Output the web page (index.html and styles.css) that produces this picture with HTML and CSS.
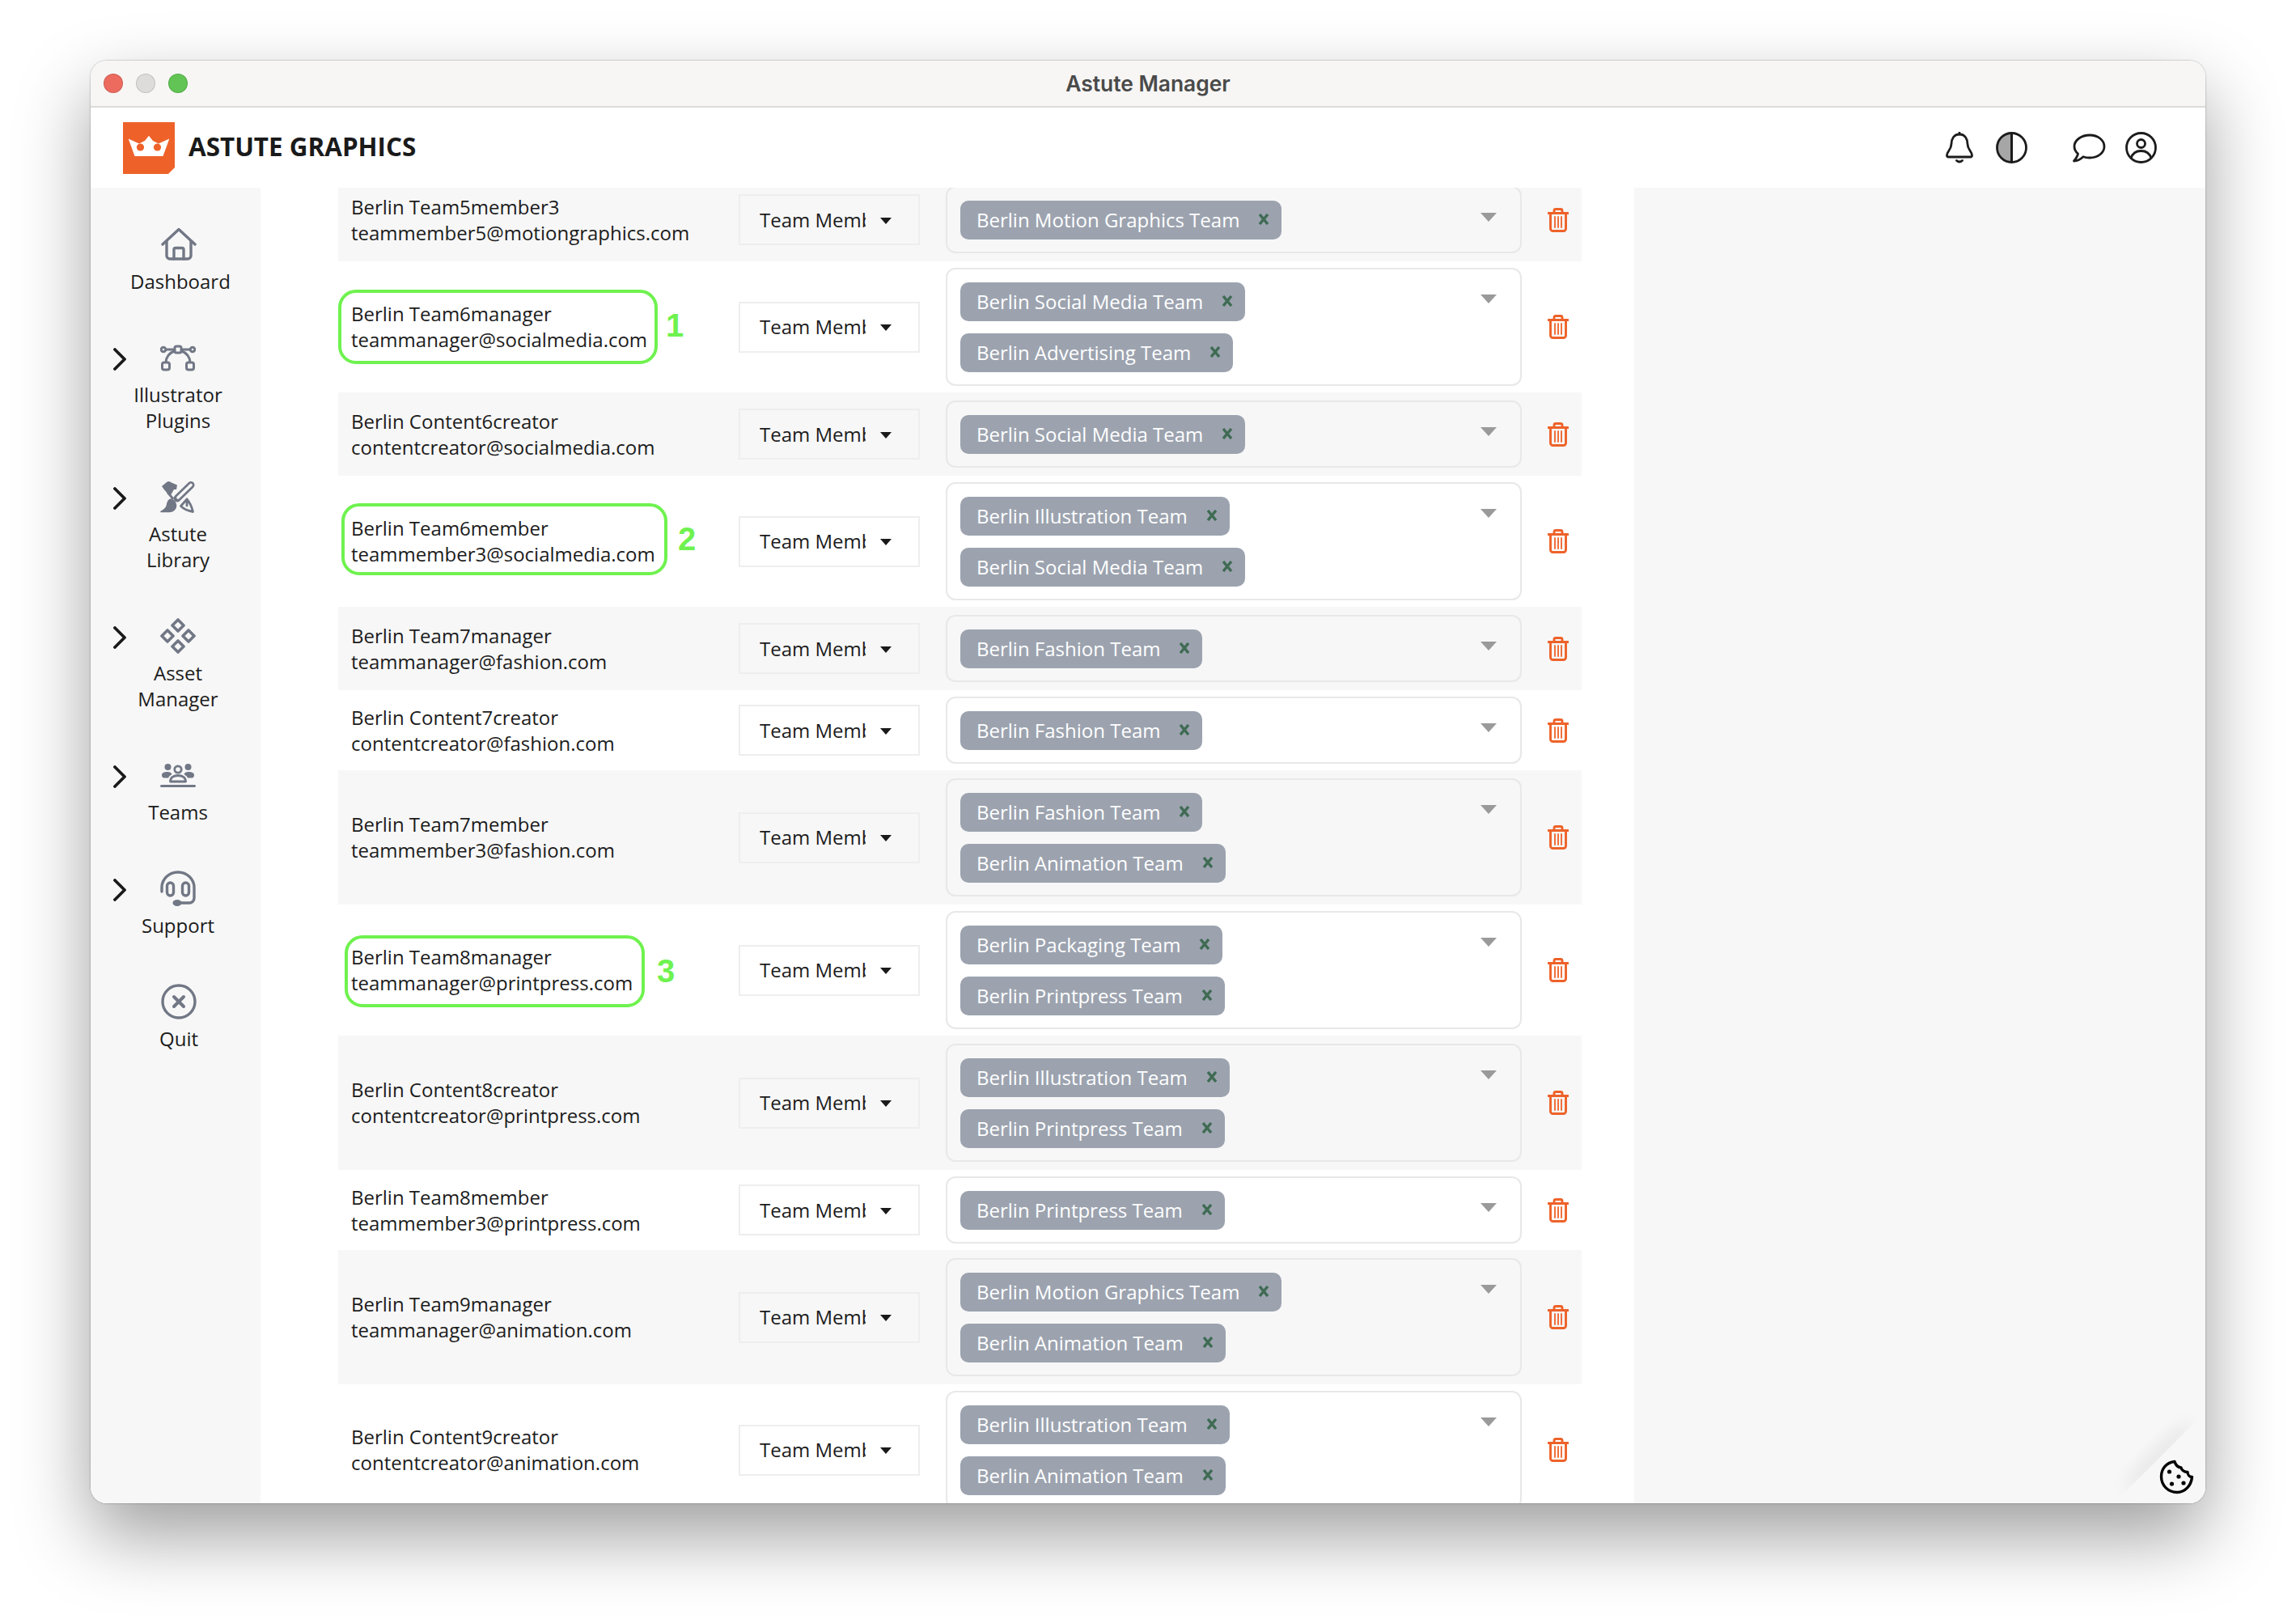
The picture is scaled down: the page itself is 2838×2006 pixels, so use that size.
FILE: index.html
```html
<!DOCTYPE html>
<html lang="en">
<head>
<meta charset="utf-8">
<title>Astute Manager</title>
<link rel="stylesheet" href="styles.css">
</head>
<body>
<svg class="sprite" aria-hidden="true">
  <symbol id="trash" viewBox="0 0 26 30"><g fill="none" stroke="#ee6229" stroke-width="2.900" stroke-linecap="round" stroke-linejoin="round"><path d="M1 6.500H25"/><path d="M8 6.500V3.500a2 2 0 0 1 2-2h6a2 2 0 0 1 2 2V6.500"/><path d="M3.500 6.500V25.500a3 3 0 0 0 3 3h13a3 3 0 0 0 3-3V6.500"/><path stroke-width="1.800" d="M9 11V24M13 11V24M17 11V24"/></g></symbol>
  <symbol id="close" viewBox="0 0 14 14"><path d="M2 1L12 13M12 1L2 13" fill="none" stroke="#3f6b53" stroke-width="3.400"/></symbol>
  <symbol id="chev" viewBox="0 0 16 28"><path d="M2 2L14 14L2 26" fill="none" stroke="#1a1a1a" stroke-width="3.800" stroke-linecap="round" stroke-linejoin="round"/></symbol>
</svg>
<div class="window">
  <div class="titlebar">
    <div class="lights"><span class="light red"></span><span class="light grey"></span><span class="light green"></span></div>
    <div class="title">Astute Manager</div>
  </div>
  <header class="appbar">
    <svg class="logo" viewBox="0 0 64 64"><path d="M0 0H64V56L56 64H0Z" fill="#ee6229"/><path d="M6.700 20.500L20 26.500L27 23L32 16.700L37 23L44 26.500L57.300 20.500L49.500 42H14.500Z" fill="#fff"/><circle cx="21.500" cy="31" r="4.600" fill="#ee6229"/><circle cx="42.500" cy="31" r="4.600" fill="#ee6229"/></svg>
    <div class="brand">ASTUTE GRAPHICS</div>
    <div class="tools">
      <svg class="bell" viewBox="0 0 34 39"><g fill="none" stroke="#1c1c1c" stroke-width="2.800" stroke-linecap="round" stroke-linejoin="round"><path d="M17 3C10 3 7 9 7 15C7 22 1.500 24 1.500 29C1.500 30.500 2.500 31 3.500 31H30.500C31.500 31 32.500 30.500 32.500 29C32.500 24 27 22 27 15C27 9 24 3 17 3Z"/><path d="M17 1V3"/><path d="M13.500 35.500Q17 38.500 20.500 35.500"/></g></svg>
      <svg class="contrast" viewBox="0 0 39 39"><path d="M19.500 1.500A18 18 0 0 0 19.500 37.500Z" fill="#a6a6a6"/><circle cx="19.500" cy="19.500" r="18" fill="none" stroke="#1c1c1c" stroke-width="2.800"/><path d="M19.500 1.500V37.500" stroke="#1c1c1c" stroke-width="3"/></svg>
      <svg class="chat" viewBox="0 0 41 36"><path d="M21 2C31 2 39 8 39 16C39 24 31 30 21 30C18 30 15 29.500 13 28.700C10 31.500 6 34 1.500 34C4 31 6 28 6.500 25C3.500 22.500 2 19.500 2 16C2 8 11 2 21 2Z" fill="none" stroke="#1c1c1c" stroke-width="2.800" stroke-linejoin="round"/></svg>
      <svg class="user" viewBox="0 0 39 39"><g fill="none" stroke="#1c1c1c" stroke-width="2.800"><circle cx="19.500" cy="19.500" r="18"/><circle cx="19.500" cy="14.500" r="5"/><path d="M7 32.500C9 26.500 14 23.500 19.500 23.500C25 23.500 30 26.500 32 32.500"/></g></svg>
    </div>
  </header>
  <div class="body">
    <nav class="sidebar">
      <div class="nav-item solo">
        <div class="nav-main">
          <svg class="nav-icon" viewBox="0 0 44 44"><g fill="none" stroke="#717785" stroke-width="3.400" stroke-linecap="round" stroke-linejoin="round"><path d="M2 22L22 3.500L42 22"/><path d="M7 18V36a4 4 0 0 0 4 4H33a4 4 0 0 0 4-4V18"/><path d="M16 40V28.500a2 2 0 0 1 2-2h8a2 2 0 0 1 2 2V40"/></g></svg>
          <div class="nav-label">Dashboard</div>
        </div>
      </div>
      <div class="nav-item">
        <svg class="nav-chev"><use href="#chev"/></svg>
        <div class="nav-main">
          <svg class="nav-icon" viewBox="0 0 44 44"><g fill="none" stroke="#717785" stroke-width="3" stroke-linejoin="round"><path d="M7 12H18M26 12H37"/><circle cx="4" cy="12" r="2.800"/><circle cx="40" cy="12" r="2.800"/><rect x="18" y="8" width="8" height="8" rx="2"/><path d="M18.500 13.500C11 16 7 22 7 28M25.500 13.500C33 16 37 22 37 28"/><rect x="2.500" y="28" width="9" height="9" rx="2.500"/><rect x="32.500" y="28" width="9" height="9" rx="2.500"/></g></svg>
          <div class="nav-label">Illustrator<br>Plugins</div>
        </div>
      </div>
      <div class="nav-item">
        <svg class="nav-chev"><use href="#chev"/></svg>
        <div class="nav-main">
          <svg class="nav-icon" viewBox="0 0 44 44"><g transform="translate(0 3)" stroke-linecap="round" stroke-linejoin="round"><path fill="#717785" d="M2 6L8 1C10 -0.500 12 0 14 1.500L21 4.500L20 10L17 10L13 17C9 15 5 11 2 6Z"/><path fill="none" stroke="#717785" stroke-width="2.800" d="M9.500 14L15.500 21"/><path fill="none" stroke="#717785" stroke-width="9" d="M21 21L38 4.500"/><path fill="none" stroke="#f7f7f7" stroke-width="3.600" d="M22 20L38 4.500"/><path fill="#717785" stroke="#717785" stroke-width="1.500" d="M13 22C9.500 23 9 26 8.500 29C8 33 5 35 1 37.500H11C17 37.500 20 33 19.500 29C19.200 26 16 22.500 13 22Z"/><path fill="none" stroke="#717785" stroke-width="2.800" d="M33 22C36.500 26 39 31 40.500 37.500C34.500 36.500 29 34 25.500 30.500L33 22M33 22L33 30"/></g></svg>
          <div class="nav-label">Astute<br>Library</div>
        </div>
      </div>
      <div class="nav-item">
        <svg class="nav-chev"><use href="#chev"/></svg>
        <div class="nav-main">
          <svg class="nav-icon" viewBox="0 0 44 44"><g fill="none" stroke="#717785" stroke-width="3.600" stroke-linejoin="round"><path d="M22 2L29 9L22 16L15 9Z"/><path d="M9 15L16 22L9 29L2 22Z"/><path d="M35 15L42 22L35 29L28 22Z"/><path d="M22 28L29 35L22 42L15 35Z"/></g></svg>
          <div class="nav-label">Asset<br>Manager</div>
        </div>
      </div>
      <div class="nav-item">
        <svg class="nav-chev"><use href="#chev"/></svg>
        <div class="nav-main">
          <svg class="nav-icon" viewBox="0 0 44 44"><g fill="#717785"><circle cx="9.500" cy="12" r="4"/><circle cx="34.500" cy="12" r="4"/><path d="M2 22C2 19 5 18 9 18C12 18 14 19 14.500 21C12 22.500 10.500 24 10 25.500H5C3 25.500 2 24 2 22Z"/><path d="M42 22C42 19 39 18 35 18C32 18 30 19 29.500 21C32 22.500 33.500 24 34 25.500H39C41 25.500 42 24 42 22Z"/><rect x="0" y="34" width="44" height="3" rx="1.500"/></g><g fill="none" stroke="#717785" stroke-width="2.800"><circle cx="22" cy="15" r="4.200"/><path d="M12.500 30C12.500 25 16.500 22.500 22 22.500C27.500 22.500 31.500 25 31.500 30Z" stroke-linejoin="round"/></g></svg>
          <div class="nav-label">Teams</div>
        </div>
      </div>
      <div class="nav-item">
        <svg class="nav-chev"><use href="#chev"/></svg>
        <div class="nav-main">
          <svg class="nav-icon" viewBox="0 0 44 44"><g fill="none" stroke="#717785" stroke-width="3.400" stroke-linecap="round"><path d="M2 26V21A20 19 0 0 1 42 21V34a6 6 0 0 1-6 6H20"/><rect x="8.500" y="15" width="8" height="16" rx="4"/><rect x="27.500" y="15" width="8" height="16" rx="4"/></g><ellipse cx="21" cy="40" rx="5.500" ry="4" fill="#717785"/></svg>
          <div class="nav-label">Support</div>
        </div>
      </div>
      <div class="nav-item quit-item">
        <div class="nav-spacer"></div>
        <div class="nav-main">
          <svg class="nav-icon" viewBox="0 0 44 44"><g fill="none" stroke="#717785"><circle cx="22" cy="22" r="20" stroke-width="3.400"/><path d="M16 16L28 28M28 16L16 28" stroke-width="4" stroke-linecap="round"/></g></svg>
          <div class="nav-label">Quit</div>
        </div>
      </div>
    </nav>
    <main class="main">
      <div class="list">
        <div class="row shade">
          <div class="name"><div class="who">Berlin Team5member3<br>teammember5@motiongraphics.com</div></div>
          <div class="role"><span class="role-text">Team Member</span><i class="caret"></i></div>
          <div class="teams"><i class="drop"></i><span class="tag">Berlin Motion Graphics Team<svg class="x"><use href="#close"/></svg></span></div>
          <svg class="trash"><use href="#trash"/></svg>
        </div>
        <div class="row">
          <div class="name"><div class="who"><span class="ring ring-1"></span><span class="num num-1">1</span>Berlin Team6manager<br>teammanager@socialmedia.com</div></div>
          <div class="role"><span class="role-text">Team Member</span><i class="caret"></i></div>
          <div class="teams"><i class="drop"></i><span class="tag">Berlin Social Media Team<svg class="x"><use href="#close"/></svg></span><span class="tag">Berlin Advertising Team<svg class="x"><use href="#close"/></svg></span></div>
          <svg class="trash"><use href="#trash"/></svg>
        </div>
        <div class="row shade">
          <div class="name"><div class="who">Berlin Content6creator<br>contentcreator@socialmedia.com</div></div>
          <div class="role"><span class="role-text">Team Member</span><i class="caret"></i></div>
          <div class="teams"><i class="drop"></i><span class="tag">Berlin Social Media Team<svg class="x"><use href="#close"/></svg></span></div>
          <svg class="trash"><use href="#trash"/></svg>
        </div>
        <div class="row">
          <div class="name"><div class="who"><span class="ring ring-2"></span><span class="num num-2">2</span>Berlin Team6member<br>teammember3@socialmedia.com</div></div>
          <div class="role"><span class="role-text">Team Member</span><i class="caret"></i></div>
          <div class="teams"><i class="drop"></i><span class="tag">Berlin Illustration Team<svg class="x"><use href="#close"/></svg></span><span class="tag">Berlin Social Media Team<svg class="x"><use href="#close"/></svg></span></div>
          <svg class="trash"><use href="#trash"/></svg>
        </div>
        <div class="row shade">
          <div class="name"><div class="who">Berlin Team7manager<br>teammanager@fashion.com</div></div>
          <div class="role"><span class="role-text">Team Member</span><i class="caret"></i></div>
          <div class="teams"><i class="drop"></i><span class="tag">Berlin Fashion Team<svg class="x"><use href="#close"/></svg></span></div>
          <svg class="trash"><use href="#trash"/></svg>
        </div>
        <div class="row">
          <div class="name"><div class="who">Berlin Content7creator<br>contentcreator@fashion.com</div></div>
          <div class="role"><span class="role-text">Team Member</span><i class="caret"></i></div>
          <div class="teams"><i class="drop"></i><span class="tag">Berlin Fashion Team<svg class="x"><use href="#close"/></svg></span></div>
          <svg class="trash"><use href="#trash"/></svg>
        </div>
        <div class="row shade">
          <div class="name"><div class="who">Berlin Team7member<br>teammember3@fashion.com</div></div>
          <div class="role"><span class="role-text">Team Member</span><i class="caret"></i></div>
          <div class="teams"><i class="drop"></i><span class="tag">Berlin Fashion Team<svg class="x"><use href="#close"/></svg></span><span class="tag">Berlin Animation Team<svg class="x"><use href="#close"/></svg></span></div>
          <svg class="trash"><use href="#trash"/></svg>
        </div>
        <div class="row">
          <div class="name"><div class="who"><span class="ring ring-3"></span><span class="num num-3">3</span>Berlin Team8manager<br>teammanager@printpress.com</div></div>
          <div class="role"><span class="role-text">Team Member</span><i class="caret"></i></div>
          <div class="teams"><i class="drop"></i><span class="tag">Berlin Packaging Team<svg class="x"><use href="#close"/></svg></span><span class="tag">Berlin Printpress Team<svg class="x"><use href="#close"/></svg></span></div>
          <svg class="trash"><use href="#trash"/></svg>
        </div>
        <div class="row shade">
          <div class="name"><div class="who">Berlin Content8creator<br>contentcreator@printpress.com</div></div>
          <div class="role"><span class="role-text">Team Member</span><i class="caret"></i></div>
          <div class="teams"><i class="drop"></i><span class="tag">Berlin Illustration Team<svg class="x"><use href="#close"/></svg></span><span class="tag">Berlin Printpress Team<svg class="x"><use href="#close"/></svg></span></div>
          <svg class="trash"><use href="#trash"/></svg>
        </div>
        <div class="row">
          <div class="name"><div class="who">Berlin Team8member<br>teammember3@printpress.com</div></div>
          <div class="role"><span class="role-text">Team Member</span><i class="caret"></i></div>
          <div class="teams"><i class="drop"></i><span class="tag">Berlin Printpress Team<svg class="x"><use href="#close"/></svg></span></div>
          <svg class="trash"><use href="#trash"/></svg>
        </div>
        <div class="row shade">
          <div class="name"><div class="who">Berlin Team9manager<br>teammanager@animation.com</div></div>
          <div class="role"><span class="role-text">Team Member</span><i class="caret"></i></div>
          <div class="teams"><i class="drop"></i><span class="tag">Berlin Motion Graphics Team<svg class="x"><use href="#close"/></svg></span><span class="tag">Berlin Animation Team<svg class="x"><use href="#close"/></svg></span></div>
          <svg class="trash"><use href="#trash"/></svg>
        </div>
        <div class="row">
          <div class="name"><div class="who">Berlin Content9creator<br>contentcreator@animation.com</div></div>
          <div class="role"><span class="role-text">Team Member</span><i class="caret"></i></div>
          <div class="teams"><i class="drop"></i><span class="tag">Berlin Illustration Team<svg class="x"><use href="#close"/></svg></span><span class="tag">Berlin Animation Team<svg class="x"><use href="#close"/></svg></span></div>
          <svg class="trash"><use href="#trash"/></svg>
        </div>
      </div>
    </main>
    <aside class="aside"></aside>
  </div>
  <svg class="fold" viewBox="0 0 140 140">
    <defs>
      <filter id="foldBlur" x="-50%" y="-50%" width="200%" height="200%"><feGaussianBlur stdDeviation="9"/></filter>
    </defs>
    <ellipse cx="82" cy="82" rx="58" ry="11" transform="rotate(-45 82 82)" fill="#000" fill-opacity="0.060" filter="url(#foldBlur)"/>
    <path d="M140 27V140H27Z" fill="#f7f7f7"/>
  </svg>
  <svg class="cookie" viewBox="0 0 43 43"><path d="M19 2.500C9 3.500 2.500 11 2.500 21C2.500 32 11 40.500 22 40.500C32 40.500 39.500 32 40.500 21.500C37.500 21.500 35 19 35 15.500C31 15.500 27.500 13 27 10C23 9.500 20 6.500 19 2.500Z" fill="none" stroke="#000" stroke-width="3.400" stroke-linejoin="round"/><circle cx="12.500" cy="15" r="2.600"/><circle cx="24" cy="21" r="2.600"/><circle cx="15.500" cy="30" r="2.600"/><circle cx="30" cy="29" r="2.600"/></svg>
</div>
</body>
</html>
```
FILE: styles.css
```css
* { box-sizing: border-box; }
html, body { margin: 0; height: 100%; background: #fff; overflow: hidden; }
body {
  padding: 75px 112px 0;
  font-family: "Open Sans", "Noto Sans", sans-serif;
  font-size: 24px;
  line-height: 32px;
  color: #1c1c1c;
}
.sprite { display: none; }
.window {
  position: relative;
  width: 2614px;
  height: 1783px;
  background: #fff;
  border-radius: 20px;
  overflow: hidden;
  display: flex;
  flex-direction: column;
}
body::before {
  content: "";
  position: absolute;
  left: 112px;
  top: 75px;
  width: 2614px;
  height: 1783px;
  border-radius: 20px;
  box-shadow: 0 40px 90px rgba(0,0,0,.38), 0 0 2px rgba(0,0,0,.45);
}
.titlebar {
  flex: 0 0 58px;
  background: #f7f6f5;
  border-bottom: 2px solid #dcdbda;
  display: flex;
  align-items: center;
  position: relative;
  padding-left: 16px;
}
.lights { display: flex; gap: 16px; }
.light { width: 24px; height: 24px; border-radius: 50%; border: 1px solid rgba(0,0,0,.12); }
.red { background: #ec6a5e; }
.grey { background: #dddcdb; }
.green { background: #61c454; }
.title {
  position: absolute;
  left: 0;
  right: 0;
  text-align: center;
  font-family: Inter, "Liberation Sans", sans-serif;
  font-weight: 600;
  font-size: 26.400px;
  color: #4a4a4a;
}
.appbar {
  flex: 0 0 99px;
  display: flex;
  align-items: center;
  padding: 0 60px 0 40px;
}
.logo { width: 64px; height: 64px; flex: none; }
.brand { margin: 0 0 4px 17px; font-weight: 700; font-size: 31.400px; color: #1a1a1a; line-height: 40px; }
.tools { margin-left: auto; display: flex; align-items: center; }
.bell { width: 34px; height: 39px; }
.contrast { width: 39px; height: 39px; margin-left: 28px; }
.chat { width: 41px; height: 36px; margin-left: 56px; }
.user { width: 39px; height: 39px; margin-left: 24px; }
.body { flex: 1; display: flex; min-height: 0; }
.sidebar {
  flex: 0 0 210px;
  background: #f7f7f7;
  padding-top: 48px;
  display: flex;
  flex-direction: column;
  gap: 56px;
}
.nav-item { display: flex; align-items: flex-start; padding-left: 28px; }
.nav-item.solo { padding-left: 49px; }
.nav-item.quit-item { padding-left: 29px; }
.nav-chev { width: 16px; height: 28px; flex: none; margin: 10px 0 0; }
.nav-spacer { width: 16px; flex: none; }
.nav-main { width: 120px; margin-left: 4px; text-align: center; }
.solo .nav-main { margin-left: 0; }
.nav-icon { display: block; width: 44px; height: 44px; margin: 0 auto 8px; }
.nav-label { white-space: nowrap; }
.main { flex: 0 0 1698px; padding-left: 96px; overflow: hidden; }
.list { width: 1537px; margin-top: -12px; }
.row { display: flex; align-items: center; padding: 8px 0; background: #fff; }
.row.shade { padding: 10px 0; background: #f7f7f7; }
.name { flex: 0 0 495px; padding-left: 16px; }
.who { position: relative; white-space: nowrap; }
.ring { position: absolute; border: 4.500px solid #6ff24f; border-radius: 22px; }
.ring-1 { left: -16px; top: -14px; width: 395px; height: 92px; }
.ring-2 { left: -12px; top: -15px; width: 403px; height: 89px; }
.ring-3 { left: -8px; top: -11px; width: 371px; height: 89px; }
.num {
  position: absolute;
  font-family: "Liberation Sans", Arial, sans-serif;
  font-weight: 700;
  font-size: 40px;
  line-height: 40px;
  color: #6ff24f;
}
.num-1 { left: 389px; top: 10px; }
.num-2 { left: 404px; top: 9px; }
.num-3 { left: 378px; top: 13px; }
.role {
  flex: 0 0 224px;
  height: 63px;
  border: 2px solid #eeeeee;
  display: flex;
  align-items: center;
  padding-left: 24px;
}
.role-text { width: 131px; overflow: hidden; white-space: nowrap; }
.caret {
  margin: 2px 0 0 18px;
  width: 0;
  height: 0;
  border-left: 7px solid transparent;
  border-right: 7px solid transparent;
  border-top: 8px solid #1a1a1a;
}
.teams {
  position: relative;
  flex: 0 0 712px;
  margin-left: 32px;
  padding: 16px 0 0 16px;
  border: 2px solid #e8e8e8;
  border-radius: 12px;
  display: flex;
  flex-direction: column;
  align-items: flex-start;
}
.drop {
  position: absolute;
  right: 29px;
  top: 31px;
  width: 0;
  height: 0;
  border-left: 10px solid transparent;
  border-right: 10px solid transparent;
  border-top: 11px solid #9a9a9a;
}
.tag {
  display: flex;
  align-items: center;
  height: 48px;
  margin-bottom: 15px;
  padding: 0 15px 0 20px;
  background: #9ca3af;
  border-radius: 10px;
  color: #fff;
  white-space: nowrap;
}
.x { width: 14px; height: 14px; margin-left: 23px; margin-top: -2px; flex: none; }
.trash { width: 26px; height: 30px; margin-left: 32px; flex: none; }
.aside { flex: 1; background: #f7f7f7; }
.fold { position: absolute; right: 0; bottom: 0; width: 140px; height: 140px; }
.cookie { position: absolute; right: 14px; bottom: 11px; width: 43px; height: 43px; }
```
